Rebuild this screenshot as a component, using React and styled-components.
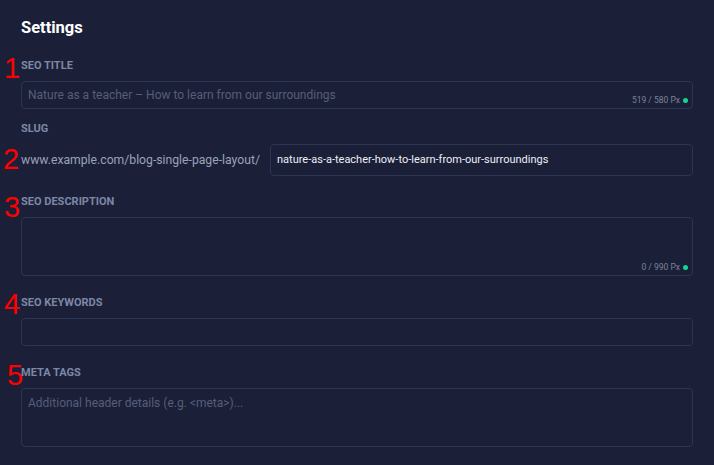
import React from 'react'
import styled, { createGlobalStyle } from 'styled-components'

const GlobalStyle = createGlobalStyle`
  html, body {
    margin: 0;
    padding: 0;
    background: #1b2038;
  }
  * { box-sizing: border-box; }
`

const Page = styled.div`
  position: relative;
  width: 714px;
  height: 465px;
  background: #1b2038;
  padding: 18px 21px 0 21px;
  font-family: Roboto, "Liberation Sans", sans-serif;
  overflow: hidden;
`

const Title = styled.h2`
  margin: 0 0 21px;
  font-size: 16.5px;
  line-height: 20px;
  font-weight: 700;
  color: #ffffff;
`

const Field = styled.div`
  display: flex;
  flex-direction: column;
  margin-bottom: ${props => props.$gap || 20}px;
`

const Label = styled.label`
  font-size: 11px;
  line-height: 14px;
  font-weight: 700;
  color: #7d87a6;
  text-transform: uppercase;
  margin-bottom: 8px;
`

const Box = styled.div`
  position: relative;
  height: ${props => props.$h}px;
  flex: none;
  border: 1px solid #2c3552;
  border-radius: 4px;
  background: #1b2038;
  padding: ${props => props.$multi ? '6px 6px' : '0 6px'};
  display: flex;
  align-items: ${props => props.$multi ? 'flex-start' : 'center'};
`

const Text = styled.span`
  font-size: 12px;
  line-height: 16px;
  color: ${props => props.$placeholder ? '#565e79' : '#e6e9f2'};
  white-space: nowrap;
`

const Counter = styled.div`
  position: absolute;
  right: 4px;
  bottom: 3px;
  display: flex;
  align-items: center;
  gap: 3px;
  font-size: 8.5px;
  line-height: 10px;
  color: #7a829b;
`

const Dot = styled.span`
  width: 5px;
  height: 5px;
  border-radius: 50%;
  background: #13d68f;
`

const SlugRow = styled.div`
  display: flex;
  align-items: center;
  gap: 13px;
`

const Prefix = styled.span`
  width: 236px;
  flex: none;
  font-size: 12.2px;
  color: #9aa2bb;
  white-space: nowrap;
`

const SlugBox = styled(Box)`
  flex: 1;
`

const SlugText = styled(Text)`
  font-size: 11px;
  color: #eceff6;
`

const Marker = styled.span`
  position: absolute;
  top: ${props => props.$y}px;
  left: ${props => props.$x}px;
  font-family: "Liberation Sans", Arial, sans-serif;
  font-size: 29px;
  line-height: 1;
  color: #ff0000;
  pointer-events: none;
`

export default function App() {
  return (
    <>
      <GlobalStyle />
      <Page>
        <Title>Settings</Title>

        <Field $gap={13}>
          <Label>SEO Title</Label>
          <Box $h={28}>
            <Text $placeholder>Nature as a teacher – How to learn from our surroundings</Text>
            <Counter>519 / 580 Px <Dot /></Counter>
          </Box>
        </Field>

        <Field $gap={19}>
          <Label>Slug</Label>
          <SlugRow>
            <Prefix>www.example.com/blog-single-page-layout/</Prefix>
            <SlugBox $h={32}>
              <SlugText>nature-as-a-teacher-how-to-learn-from-our-surroundings</SlugText>
            </SlugBox>
          </SlugRow>
        </Field>

        <Field>
          <Label>SEO Description</Label>
          <Box $h={59} $multi>
            <Counter>0 / 990 Px <Dot /></Counter>
          </Box>
        </Field>

        <Field>
          <Label>SEO Keywords</Label>
          <Box $h={28} />
        </Field>

        <Field>
          <Label>Meta Tags</Label>
          <Box $h={59} $multi>
            <Text $placeholder>Additional header details (e.g. &lt;meta&gt;)...</Text>
          </Box>
        </Field>

        <Marker $x={4} $y={54}>1</Marker>
        <Marker $x={3} $y={145}>2</Marker>
        <Marker $x={4} $y={193}>3</Marker>
        <Marker $x={4} $y={290}>4</Marker>
        <Marker $x={7} $y={361}>5</Marker>
      </Page>
    </>
  )
}
